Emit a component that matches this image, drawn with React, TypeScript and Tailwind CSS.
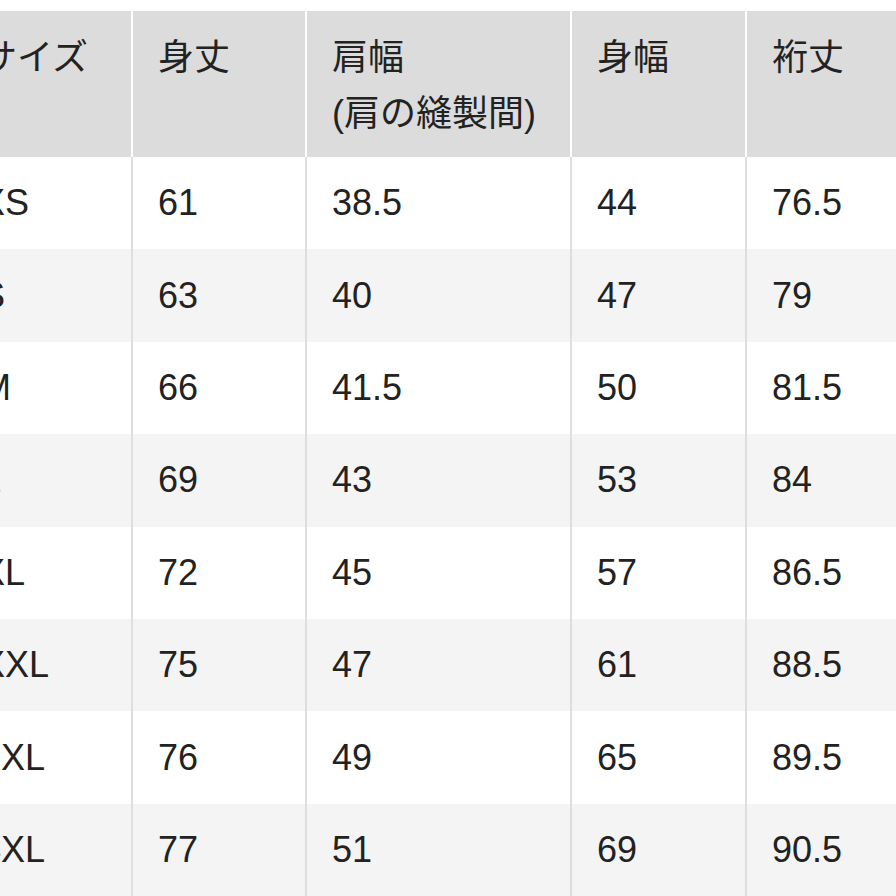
const headers = ["サイズ", "身丈", "肩幅\n(肩の縫製間)", "身幅", "裄丈"];

const rows = [
  ["XS", "61", "38.5", "44", "76.5"],
  ["S", "63", "40", "47", "79"],
  ["M", "66", "41.5", "50", "81.5"],
  ["L", "69", "43", "53", "84"],
  ["XL", "72", "45", "57", "86.5"],
  ["XXL", "75", "47", "61", "88.5"],
  ["3XL", "76", "49", "65", "89.5"],
  ["4XL", "77", "51", "69", "90.5"],
];

const cols = "grid grid-cols-[177px_174px_265px_175px_1fr]";

export default function App() {
  return (
    <div
      className="w-[896px] h-[896px] overflow-hidden bg-white text-[#222] pt-[11px]"
      style={{ fontFamily: '"Liberation Sans", "Noto Sans CJK JP", sans-serif' }}
    >
      <div className="w-[940px] -ml-[44px]">
        <div className={`${cols} h-[146px] bg-[#dcdcdc]`}>
          {headers.map((h, i) => (
            <div
              key={i}
              className={`pl-[25px] pt-[19px] text-[36px] leading-[56px] whitespace-pre-line ${
                i < headers.length - 1 ? "border-r-2 border-white" : ""
              }`}
            >
              {h}
            </div>
          ))}
        </div>
        {rows.map((r, ri) => (
          <div
            key={ri}
            className={`${cols} h-[92.4px] ${ri % 2 === 1 ? "bg-[#f4f4f4]" : "bg-white"}`}
          >
            {r.map((c, ci) => (
              <div
                key={ci}
                className={`flex items-center pl-[25px] text-[36px] ${
                  ci < r.length - 1 ? "border-r-2 border-[#dedede]" : ""
                }`}
              >
                {c}
              </div>
            ))}
          </div>
        ))}
      </div>
    </div>
  );
}
